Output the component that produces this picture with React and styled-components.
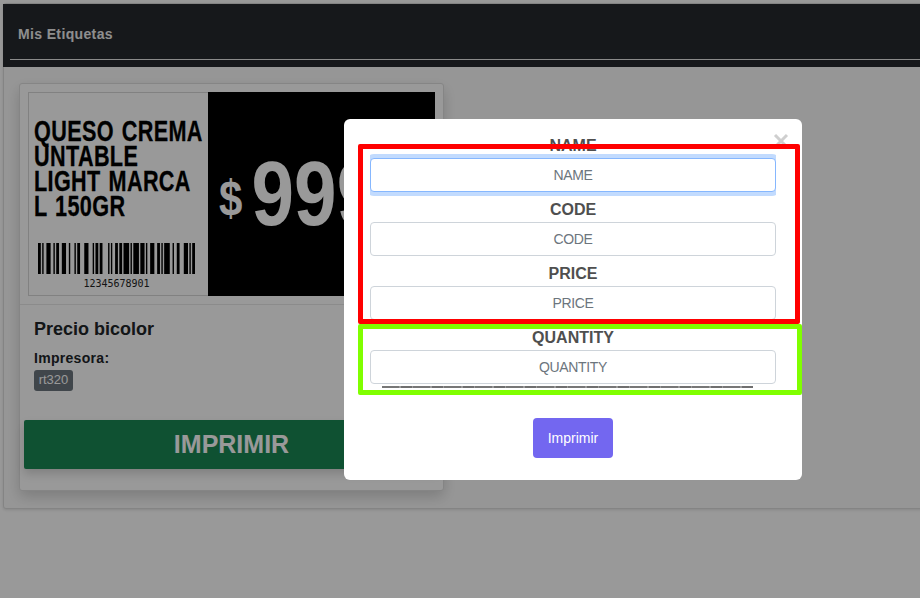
import React from "react";
import styled, { createGlobalStyle } from "styled-components";

const GlobalStyle = createGlobalStyle`
  html, body {
    margin: 0;
    padding: 0;
    height: 100%;
    background: #fff;
    font-family: "Liberation Sans", Arial, sans-serif;
    overflow: hidden;
  }
  * { box-sizing: border-box; }
`;

const Page = styled.div`
  position: relative;
  height: 598px;
  padding: 3px 0 0 3px;
  overflow: hidden;
`;

const Panel = styled.section`
  width: 940px;
  height: 506px;
  background: #fbfbfb;
  border: 1px solid #ddd;
  border-radius: 3px;
  box-shadow: 0 1px 3px rgba(0, 0, 0, 0.12);
`;

const PanelHeader = styled.header`
  height: 63px;
  background: #25282e;
  padding-left: 7px;
  padding-top: 55px;
  margin: 0 0 0 -1px;
  position: relative;
`;

const HeaderRule = styled.div`
  height: 1px;
  background: #e6e6e6;
`;

const Title = styled.h1`
  position: absolute;
  left: 15px;
  top: 21px;
  margin: 0;
  font-size: 14px;
  line-height: 18px;
  font-weight: 700;
  letter-spacing: 0.36px;
  color: #ededed;
`;

const PanelBody = styled.div`
  padding: 16px 15px;
`;

const Card = styled.article`
  width: 425px;
  height: 408px;
  background: #fff;
  border: 1px solid #dedede;
  border-radius: 3px;
  box-shadow: 0 6px 14px rgba(0, 0, 0, 0.17);
`;

const LabelPreview = styled.div`
  display: flex;
  width: 407px;
  height: 204px;
  margin: 8px 8px 0;
  background: #fff;
`;

const LabelLeft = styled.div`
  width: 180px;
  flex: none;
  display: flex;
  flex-direction: column;
  align-items: flex-start;
  padding: 26px 0 0 5px;
  border: 1px solid #d8d8d8;
  border-right: 0;
`;

const ProductName = styled.div`
  font-weight: 700;
  font-size: 29px;
  line-height: 25px;
  letter-spacing: 0.5px;
  word-spacing: 2px;
  color: #000;
  white-space: pre;
  height: 124px;
  transform: scaleX(0.745);
  transform-origin: left top;
  -webkit-text-stroke: 0.3px #000;
`;

const Barcode = styled.svg`
  display: block;
  width: 157px;
  height: 31px;
  margin-left: 4px;
`;

const BarcodeNumber = styled.div`
  width: 157px;
  margin-left: 4px;
  margin-top: 4px;
  text-align: center;
  font-family: "DejaVu Sans Mono", monospace;
  font-size: 10px;
  line-height: 12px;
  color: #222;
`;

const LabelRight = styled.div`
  width: 227px;
  min-width: 0;
  background: #000;
  color: #fff;
  display: flex;
  align-items: center;
  padding-left: 11px;
  font-weight: 700;
`;

const Price = styled.div`
  display: flex;
  align-items: center;
  white-space: nowrap;
  transform: scaleX(0.84);
  transform-origin: left center;
`;

const Currency = styled.span`
  font-size: 50px;
  line-height: 90px;
  margin: 8px 11px 0 0;
`;

const Amount = styled.span`
  font-size: 91px;
  line-height: 90px;
`;

const CardBody = styled.div`
  margin-top: 8px;
  border-top: 1px solid #e8e8e8;
  padding: 12px 0 0 14px;
`;

const CardTitle = styled.h2`
  margin: 0;
  font-size: 18px;
  line-height: 24px;
  font-weight: 700;
  color: #212529;
`;

const PrinterLabel = styled.div`
  margin-top: 7px;
  font-size: 14px;
  line-height: 20px;
  font-weight: 700;
  letter-spacing: 0.3px;
  color: #212529;
`;

const Badge = styled.span`
  display: block;
  width: 39px;
  height: 21px;
  margin-top: 2px;
  background: #6c757d;
  border-radius: 3px;
  text-align: center;
  font-size: 13px;
  line-height: 19px;
  font-weight: 400;
  color: #fff;
`;

const PrintButton = styled.button`
  display: block;
  width: 415px;
  height: 49px;
  margin: 29px 0 0 -10px;
  border: 0;
  border-radius: 2px;
  background: #198754;
  color: #fff;
  font-family: inherit;
  font-size: 25px;
  font-weight: 700;
  box-shadow: 0 5px 10px rgba(0, 0, 0, 0.16);
`;

const Backdrop = styled.div`
  position: absolute;
  inset: 0;
  background: rgba(0, 0, 0, 0.4);
  padding: 119px 0 0 344px;
`;

const Modal = styled.div`
  position: relative;
  width: 458px;
  height: 361px;
  background: #fff;
  border-radius: 6px;
  padding: 9px 26px 0;
`;

const CloseIcon = styled.svg`
  position: absolute;
  left: 429px;
  top: 14px;
  width: 16px;
  height: 16px;
`;

const Fields = styled.div`
  width: 406px;
  overflow-x: clip;
`;

const FieldLabel = styled.label`
  display: block;
  height: 30px;
  padding-top: 6px;
  text-align: center;
  font-size: 16px;
  line-height: 24px;
  font-weight: 700;
  color: #4f4f4f;
`;

const Input = styled.input`
  display: block;
  width: 100%;
  height: 34px;
  padding: 0 12px;
  background: #fff;
  border: 1px solid ${(p) => (p.$focused ? "#86b7fe" : "#ced4da")};
  border-radius: 4px;
  outline: 0;
  box-shadow: ${(p) => (p.$focused ? "0 0 0 4px rgba(13, 110, 253, 0.25)" : "none")};
  text-align: center;
  font-family: inherit;
  font-size: 14px;
  letter-spacing: -0.35px;
  color: #495057;

  &::placeholder {
    color: #6c757d;
    opacity: 1;
  }
`;

const ClippedLine = styled.div`
  width: 371px;
  height: 2px;
  margin: 2px 0 0 12px;
  background: repeating-linear-gradient(90deg, #777 0 17px, #9a9a9a 17px 19px, #6f6f6f 19px 30px, #9a9a9a 30px 31px);
`;

const SubmitRow = styled.div`
  display: flex;
  justify-content: center;
  margin-top: 30px;
`;

const SubmitButton = styled.button`
  width: 80px;
  height: 40px;
  border: 0;
  border-radius: 4px;
  background: #7367f0;
  color: #fff;
  font-family: inherit;
  font-size: 14px;
`;

const Highlight = styled.div`
  position: absolute;
  left: ${(p) => p.$left}px;
  top: ${(p) => p.$top}px;
  width: ${(p) => p.$width}px;
  height: ${(p) => p.$height}px;
  border: 5px solid ${(p) => p.$color};
  border-radius: 2px;
  pointer-events: none;
`;

// code128 for 12345678901 (start C, pairs, switch to B, "1", check, stop)
const BAR_PATTERNS = [
  "211232", "112232", "131123", "331121", "241112", "212141",
  "114131", "123221", "114212", "2331112",
];

const buildBars = () => {
  const bars = [];
  let x = 0;
  BAR_PATTERNS.join("").split("").forEach((ch, i) => {
    const w = Number(ch);
    if (i % 2 === 0) bars.push({ x, w });
    x += w;
  });
  return { bars, total: x };
};

const { bars, total } = buildBars();

const FIELDS = ["NAME", "CODE", "PRICE", "QUANTITY"];

const App = () => {
  return (
    <>
      <GlobalStyle />
      <Page>
        <Panel>
          <PanelHeader>
            <Title>Mis Etiquetas</Title>
            <HeaderRule />
          </PanelHeader>
          <PanelBody>
            <Card>
              <LabelPreview>
                <LabelLeft>
                  <ProductName>{"QUESO CREMA\nUNTABLE\nLIGHT MARCA\nL 150GR"}</ProductName>
                  <Barcode viewBox={`0 0 ${total} 31`} preserveAspectRatio="none">
                    {bars.map((b) => (
                      <rect key={b.x} x={b.x} y="0" width={b.w} height="31" fill="#000" />
                    ))}
                  </Barcode>
                  <BarcodeNumber>12345678901</BarcodeNumber>
                </LabelLeft>
                <LabelRight>
                  <Price>
                    <Currency>$</Currency>
                    <Amount>9999</Amount>
                  </Price>
                </LabelRight>
              </LabelPreview>
              <CardBody>
                <CardTitle>Precio bicolor</CardTitle>
                <PrinterLabel>Impresora:</PrinterLabel>
                <Badge>rt320</Badge>
                <PrintButton>IMPRIMIR</PrintButton>
              </CardBody>
            </Card>
          </PanelBody>
        </Panel>
        <Backdrop>
          <Modal>
            <CloseIcon viewBox="0 0 16 16">
              <path d="M2 2L14 14M14 2L2 14" stroke="#cfcfcf" strokeWidth="3" fill="none" />
            </CloseIcon>
            <Fields>
              {FIELDS.map((name, i) => (
                <div key={name}>
                  <FieldLabel>{name}</FieldLabel>
                  <Input placeholder={name} $focused={i === 0} readOnly />
                </div>
              ))}
            </Fields>
            <ClippedLine />
            <SubmitRow>
              <SubmitButton>Imprimir</SubmitButton>
            </SubmitRow>
            <Highlight $left={14} $top={25} $width={442} $height={180} $color="#ff0000" />
            <Highlight $left={14} $top={205} $width={444} $height={71} $color="#80ff00" />
          </Modal>
        </Backdrop>
      </Page>
    </>
  );
};

export default App;
